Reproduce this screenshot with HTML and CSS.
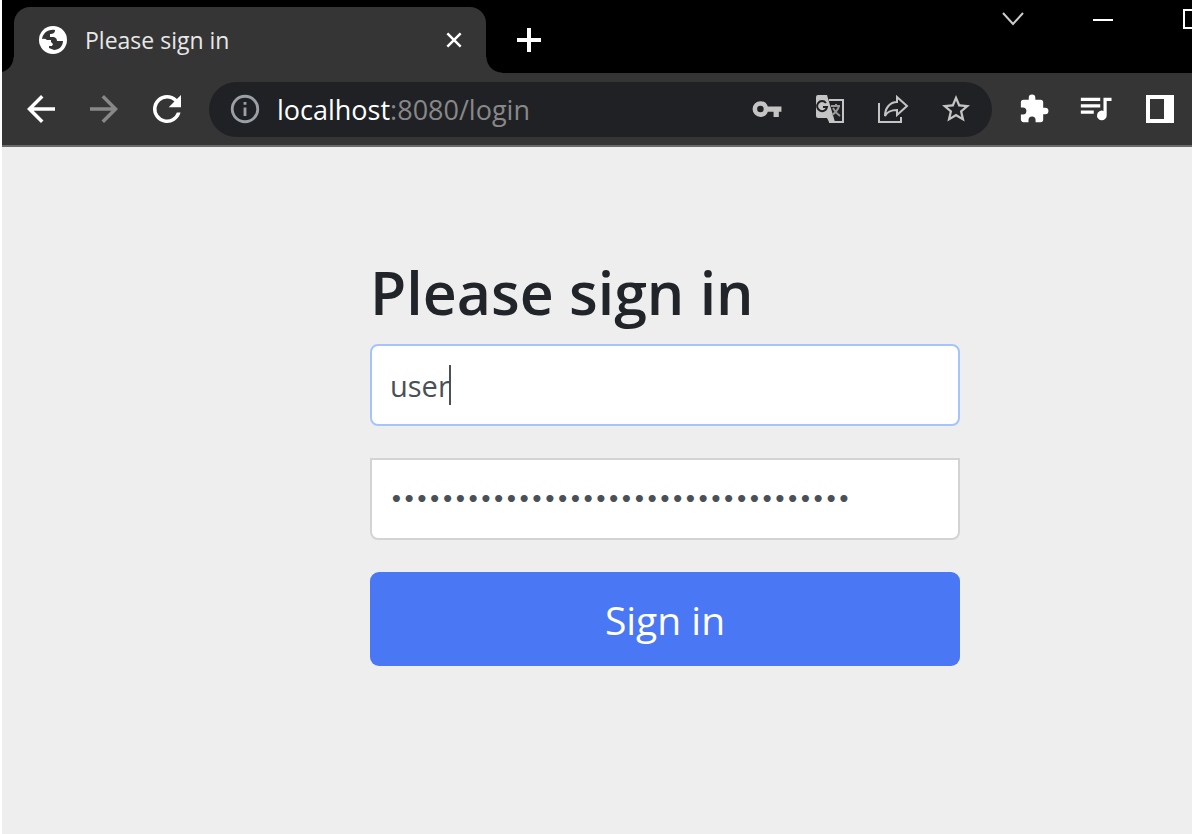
FILE: index.html
```html
<!DOCTYPE html>
<html lang="en">
<head>
  <meta charset="UTF-8">
  <meta name="viewport" content="width=device-width, initial-scale=1.0">
  <title>Please sign in</title>
  <link rel="stylesheet" href="styles.css">
</head>
<body>
  <div class="window">
    <header class="tab-strip">
      <div class="tab">
        <svg class="favicon" viewBox="0 0 28 28">
          <circle cx="14" cy="14" r="14" fill="#fff"/>
          <path d="M3 13C4 7 9 3 16 4C16 7 14 8 11 8V11H15Q18 12 18 15H24C24 20 20 24 15 24L10 22V20H13L14 18L12 16V14H8Q6 12 3 13Z" fill="#353535"/>
        </svg>
        <span class="tab-title">Please sign in</span>
        <button class="icon-button tab-close" aria-label="Close tab">
          <svg viewBox="0 0 24 24"><path d="M4 4L20 20M20 4L4 20" stroke="currentColor" stroke-width="3" fill="none"/></svg>
        </button>
      </div>
      <button class="icon-button new-tab" aria-label="New tab">
        <svg viewBox="0 0 24 24"><path d="M12 0V24M0 12H24" stroke="currentColor" stroke-width="4" fill="none"/></svg>
      </button>
      <div class="window-controls">
        <button class="icon-button" aria-label="Search tabs"><svg viewBox="0 0 24 24"><path d="M2 6L12 17L22 6" stroke="#ccc" stroke-width="2" fill="none"/></svg></button>
        <button class="icon-button" aria-label="Minimize"><svg viewBox="0 0 24 24"><path d="M2 13H22" stroke="currentColor" stroke-width="2"/></svg></button>
        <button class="icon-button" aria-label="Maximize"><svg viewBox="0 0 24 24"><path d="M3 3H21V21H3Z" stroke="currentColor" stroke-width="2" fill="none"/></svg></button>
      </div>
    </header>

    <nav class="toolbar">
      <button class="icon-button" aria-label="Back">
        <svg viewBox="0 0 24 24"><path d="M20 11H7.830l5.590-5.590L12 4l-8 8 8 8 1.410-1.410L7.830 13H20z" fill="currentColor"/></svg>
      </button>
      <button class="icon-button dim" aria-label="Forward">
        <svg viewBox="0 0 24 24"><path d="M12 4l-1.410 1.410L16.170 11H4v2h12.170l-5.580 5.590L12 20l8-8z" fill="currentColor"/></svg>
      </button>
      <button class="icon-button" aria-label="Reload">
        <svg viewBox="0 0 24 24"><path d="M17.650 6.350A7.960 7.960 0 0 0 12 4a8 8 0 1 0 7.730 10h-2.080A6 6 0 1 1 12 6c1.660 0 3.140.69 4.220 1.780L13 11h7V4z" fill="currentColor"/></svg>
      </button>

      <div class="address-bar">
        <svg class="info" viewBox="0 0 24 24"><path d="M11 7h2v2h-2zm0 4h2v6h-2zm1-9a10 10 0 1 0 0 20 10 10 0 0 0 0-20zm0 18a8 8 0 1 1 0-16 8 8 0 0 1 0 16z" fill="currentColor"/></svg>
        <span class="url"><span class="host">localhost</span>:8080/login</span>
        <button class="icon-button" aria-label="Saved passwords">
          <svg viewBox="-4 -4 32 32"><path d="M12.650 10A6 6 0 0 0 7 6a6 6 0 1 0 0 12 6 6 0 0 0 5.650-4H17v4h4v-4h2v-4H12.650zM7 14.500a2.500 2.500 0 1 1 0-5 2.500 2.500 0 0 1 0 5z" fill="currentColor"/></svg>
        </button>
        <button class="icon-button" aria-label="Translate this page">
          <svg viewBox="0 0 42 42">
            <path d="M20 12H34V34H20" fill="none" stroke="currentColor" stroke-width="2"/>
            <path d="M9 7H18L26 34H20L18 30H9Q7 30 7 28V9Q7 7 9 7Z" fill="currentColor"/>
            <path d="M17 15A5 5 0 1 0 18 19H14" fill="none" stroke="#202124" stroke-width="2"/>
            <path d="M22 18H31M27 16V18M30 18C29 22 26 25 23 27M24 20C26 24 28 26 31 28" fill="none" stroke="#999" stroke-width="2"/>
          </svg>
        </button>
        <button class="icon-button" aria-label="Share this page">
          <svg viewBox="0 0 42 42">
            <path d="M7 15V34H29V29" fill="none" stroke="currentColor" stroke-width="2"/>
            <path d="M25 9L35 18L25 27V22C19 22 15 24 13 28C13 20 18 14 25 14Z" fill="none" stroke="currentColor" stroke-width="2"/>
          </svg>
        </button>
        <button class="icon-button" aria-label="Bookmark this tab">
          <svg viewBox="-3 -3 30 30"><path d="M22 9.240l-7.190-.62L12 2 9.190 8.630 2 9.240l5.460 4.730L5.820 21 12 17.270 18.180 21l-1.630-7.030L22 9.240zM12 15.400l-3.760 2.270 1-4.280-3.320-2.880 4.380-.38L12 6.100l1.710 4.040 4.380.38-3.320 2.880 1 4.280L12 15.400z" fill="currentColor"/></svg>
        </button>
      </div>

      <button class="icon-button" aria-label="Extensions">
        <svg viewBox="-4 -4 32 32"><path d="M20.500 11H19V7a2 2 0 0 0-2-2h-4V3.500a2.500 2.500 0 0 0-5 0V5H4a2 2 0 0 0-2 2v3.800h1.500a2.700 2.700 0 0 1 0 5.400H2V20c0 1.100.9 2 2 2h3.800v-1.500a2.700 2.700 0 0 1 5.400 0V22H17a2 2 0 0 0 2-2v-4h1.500a2.500 2.500 0 0 0 0-5z" fill="currentColor"/></svg>
      </button>
      <button class="icon-button" aria-label="Media controls">
        <svg viewBox="0 0 26 26"><path d="M15 6H3v2h12V6zm0 4H3v2h12v-2zM3 16h8v-2H3v2zM17 6v8.180A3 3 0 1 0 19 17V8h3V6h-5z" fill="currentColor"/></svg>
      </button>
      <button class="icon-button" aria-label="Side panel">
        <svg viewBox="0 0 42 42"><path d="M7 7H35V35H7ZM11 11V31H25V11Z" fill="currentColor" fill-rule="evenodd"/></svg>
      </button>
    </nav>

    <main class="page">
      <form class="form-signin">
        <h1 class="form-heading">Please sign in</h1>
        <div class="field">
          <input type="text" class="form-control focused" name="username" value="user" aria-label="Username">
          <span class="caret"></span>
        </div>
        <div class="field">
          <input type="password" class="form-control password" name="password" value="a1b2c3d4-e5f6-a7b8-c9d0-e1f2a3b4c5d6" aria-label="Password">
        </div>
        <button class="submit" type="submit">Sign in</button>
      </form>
    </main>
  </div>
</body>
</html>
```
FILE: styles.css
```css
* {
  box-sizing: border-box;
}

body {
  margin: 0;
  padding: 0 4px 0 2px;
  background: #fff;
  font-family: "Open Sans", "Noto Sans", sans-serif;
}

.window {
  display: flex;
  flex-direction: column;
  min-height: 100vh;
  overflow: hidden;
  background: #eee;
}

.icon-button {
  display: flex;
  align-items: center;
  justify-content: center;
  flex: none;
  width: 42px;
  height: 42px;
  padding: 0;
  border: none;
  background: none;
  color: #fff;
}

.icon-button svg {
  width: 100%;
  height: 100%;
}

/* tab strip */
.tab-strip {
  display: flex;
  height: 73px;
  padding: 7px 0 0 12px;
  background: #000;
}

.tab {
  position: relative;
  display: flex;
  align-items: center;
  width: 472px;
  padding: 0 22px 0 25px;
  border-radius: 16px 16px 0 0;
  background: #353535;
  color: #e8e8e8;
}

/* curved feet on both sides of the tab */
.tab::before,
.tab::after {
  content: "";
  position: absolute;
  bottom: 0;
  width: 16px;
  height: 16px;
}

.tab::before {
  left: -16px;
  background: radial-gradient(circle at 0 0, #000 15px, #353535 16px);
}

.tab::after {
  right: -16px;
  background: radial-gradient(circle at 100% 0, #000 15px, #353535 16px);
}

.favicon {
  width: 28px;
  height: 28px;
}

.tab-title {
  flex: 1;
  margin-left: 18px;
  font-size: 23px;
}

.tab-close {
  width: 20px;
  height: 20px;
}

.new-tab {
  width: 24px;
  height: 24px;
  margin: 21px 0 0 31px;
}

.window-controls {
  display: flex;
  margin: 0 -46px 0 auto;
}

.window-controls .icon-button {
  width: 90px;
  height: 24px;
}

/* toolbar */
.toolbar {
  display: flex;
  align-items: center;
  gap: 21px;
  height: 74px;
  padding: 0 11px 0 18px;
  border-bottom: 2px solid #6a6a6a;
  background: #353535;
}

.toolbar .dim {
  color: #888;
}

.address-bar {
  display: flex;
  align-items: center;
  gap: 21px;
  flex: 1;
  height: 55px;
  padding: 0 15px 0 19px;
  border-radius: 28px;
  background: #202124;
  color: #9aa0a6;
}

.address-bar .icon-button {
  color: #c4c4c4;
}

.info {
  width: 34px;
  height: 34px;
}

.url {
  flex: 1;
  margin-left: -6px;
  color: #888;
  font-size: 27px;
}

.host {
  color: #fff;
}

/* sign in page */
.page {
  flex: 1;
  padding: 109px 0 0 136px;
}

.form-signin {
  max-width: 590px;
  margin: 0 auto;
}

.form-heading {
  margin: 0 0 16px;
  color: #212529;
  font-size: 59px;
  font-weight: 600;
  line-height: 72px;
}

.field {
  position: relative;
  margin-bottom: 32px;
}

.form-control {
  display: block;
  width: 100%;
  height: 82px;
  padding: 0 18px;
  border: 2px solid #d3d3d3;
  border-radius: 8px;
  background: #fff;
  color: #495057;
  font-family: inherit;
  font-size: 29px;
}

.focused {
  border-color: #a5c4fb;
}

.password {
  border-radius: 0 0 8px 8px;
  font-family: "DejaVu Sans", sans-serif;
  font-size: 20px;
  font-weight: 700;
}

.caret {
  position: absolute;
  top: 21px;
  left: 79px;
  width: 2px;
  height: 40px;
  background: #495057;
}

.submit {
  width: 100%;
  height: 94px;
  border: none;
  border-radius: 9px;
  background: #4a77f4;
  color: #fff;
  font-family: inherit;
  font-size: 39px;
}
```
